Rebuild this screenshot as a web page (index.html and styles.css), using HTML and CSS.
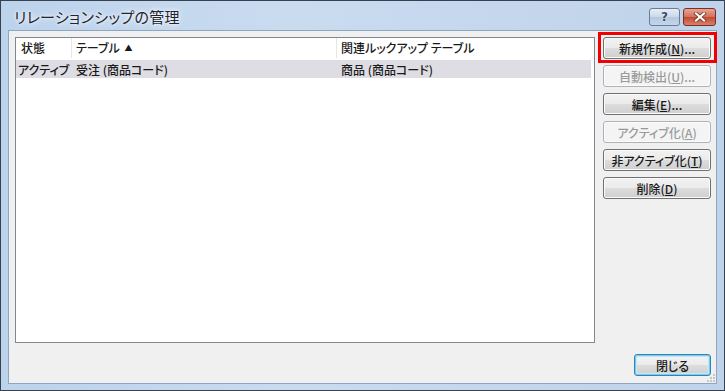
FILE: index.html
```html
<!DOCTYPE html>
<html lang="ja">
<head>
    <meta charset="UTF-8">
    <meta name="viewport" content="width=device-width, initial-scale=1.0">
    <title>リレーションシップの管理</title>
    <link rel="stylesheet" href="styles.css">
</head>
<body>
    <div class="window">
        <div class="titlebar">
            <span class="title">リレーションシップの管理</span>
            <div class="caption-btns">
                <span class="cap-btn help">?</span>
                <span class="cap-btn close">
                    <svg width="14" height="10" viewBox="0 0 14 10">
                        <path d="M3 1.5 L11 8.5 M11 1.5 L3 8.5" stroke="#6b2b20" stroke-width="3.6" stroke-linecap="square"/>
                        <path d="M3 1.5 L11 8.5 M11 1.5 L3 8.5" stroke="#fff" stroke-width="2.2" stroke-linecap="square"/>
                    </svg>
                </span>
            </div>
        </div>
        <div class="client">
            <div class="main">
                <div class="listview">
                    <div class="lv-header">
                        <div class="col c1">状態</div>
                        <div class="col c2">テーブル <span class="sort">▲</span></div>
                        <div class="col c3">関連ルックアップ テーブル</div>
                    </div>
                    <div class="lv-row">
                        <div class="col c1">アクティブ</div>
                        <div class="col c2">受注 (商品コード)</div>
                        <div class="col c3">商品 (商品コード)</div>
                    </div>
                </div>
                <div class="side">
                    <div class="marked"><button class="btn">新規作成(<u>N</u>)...</button></div>
                    <button class="btn" disabled>自動検出(<u>U</u>)...</button>
                    <button class="btn">編集(<u>E</u>)...</button>
                    <button class="btn" disabled>アクティブ化(<u>A</u>)</button>
                    <button class="btn">非アクティブ化(<u>T</u>)</button>
                    <button class="btn">削除(<u>D</u>)</button>
                </div>
            </div>
            <div class="footer">
                <button class="btn default">閉じる</button>
            </div>
            <svg class="grip" width="10" height="10" viewBox="0 0 10 10">
                <g fill="#c6c6c6">
                    <rect x="7" y="1" width="2" height="2"/>
                    <rect x="4" y="4" width="2" height="2"/><rect x="7" y="4" width="2" height="2"/>
                    <rect x="1" y="7" width="2" height="2"/><rect x="4" y="7" width="2" height="2"/><rect x="7" y="7" width="2" height="2"/>
                </g>
            </svg>
        </div>
    </div>
</body>
</html>
```
FILE: styles.css
```css
*{
    margin: 0;
    padding: 0;
    box-sizing: border-box;
}
body{
    width: 725px;
    height: 391px;
    overflow: hidden;
    font-family: "Noto Sans CJK JP", "Noto Sans", sans-serif;
    font-feature-settings: "palt";
    font-size: 12px;
    font-weight: 500;
    color: #1a1a1a;
}
.window{
    width: 725px;
    height: 391px;
    border: 1px solid #37414f;
    background: linear-gradient(to right, #bcd3ec, #c9dbef 40%, #bfd3ea);
    display: flex;
    flex-direction: column;
    padding: 0 7px 6px 7px;
}
.titlebar{
    height: 29px;
    display: flex;
    align-items: center;
    padding-left: 6px;
}
.title{
    font-size: 15px;
    font-weight: 400;
    color: #1e2530;
    letter-spacing: 0.3px;
    text-shadow: 0 0 6px #fff, 0 0 3px #fff;
    padding-top: 2px;
}
.caption-btns{
    margin-left: auto;
    display: flex;
    gap: 3px;
    align-self: flex-start;
    margin-top: 7px;
    margin-right: 1px;
}
.cap-btn{
    height: 18px;
    border: 1px solid #6c7d93;
    border-radius: 3px;
    display: flex;
    align-items: center;
    justify-content: center;
}
.help{
    width: 31px;
    background: linear-gradient(#e6eef8, #c9d8ea 50%, #b3c7de 51%, #c5d6ea);
    color: #3c4d66;
    font-family: "DejaVu Sans", sans-serif;
    font-size: 12px;
    font-weight: bold;
    text-shadow: 0 0 2px #fff;
}
.close{
    width: 33px;
    border-color: #7a2e24;
    background: linear-gradient(#e7a596, #d26f5c 50%, #c04a34 51%, #d7826a);
}
.client{
    flex: 1;
    position: relative;
    background: #f0f0f0;
    border: 1px solid #8fa6c2;
    display: flex;
    flex-direction: column;
    padding: 6px 5px 7px 6px;
}
.main{
    flex: 1;
    display: flex;
    gap: 8px;
}
.listview{
    flex: 1;
    background: #fff;
    border: 1px solid #828790;
}
.lv-header, .lv-row{
    display: flex;
    height: 20px;
    align-items: center;
}
.lv-header{
    margin-bottom: 2px;
}
.lv-header .col{
    border-right: 1px solid #e3e6eb;
    height: 20px;
    line-height: 20px;
}
.lv-header .c1{
    padding-left: 5px;
}
.lv-header .c3{
    border-right: none;
}
.col{
    white-space: nowrap;
    padding-left: 4px;
}
.c1{
    width: 56px;
}
.lv-row .c1{
    padding-left: 2px;
}
.c2{
    width: 265px;
}
.c3{
    flex: 1;
}
.lv-row{
    height: 18px;
    background: #dedde3;
    margin-right: 3px;
}
.sort{
    font-size: 8px;
    vertical-align: 2px;
    margin-left: 2px;
}
.side{
    width: 108px;
    display: flex;
    flex-direction: column;
    gap: 6px;
}
.btn{
    width: 108px;
    height: 22px;
    font: inherit;
    font-size: 12px;
    color: #1a1a1a;
    border: 1px solid #707070;
    border-radius: 3px;
    background: linear-gradient(#f2f2f2, #ebebeb 50%, #dddddd 51%, #cfcfcf);
    box-shadow: inset 0 0 0 1px #fbfbfb;
}
.btn:disabled{
    color: #9a9a9a;
    border-color: #adb2b5;
    background: #f4f4f4;
    box-shadow: inset 0 0 0 1px #fcfcfc;
}
.btn u{
    text-underline-offset: 1px;
}
.marked{
    position: relative;
}
.marked::after{
    content: "";
    position: absolute;
    left: -5px;
    top: -5px;
    right: -6px;
    bottom: -4px;
    border: 3px solid #f00000;
}
.footer{
    display: flex;
    justify-content: flex-end;
    padding-top: 11px;
}
.btn.default{
    width: 77px;
    border-color: #3c7fb1;
    box-shadow: inset 0 0 0 1px #6fd0f5, inset 0 0 0 2px #bfe8f8;
}
.grip{
    position: absolute;
    right: 0;
    bottom: 0;
}
```
